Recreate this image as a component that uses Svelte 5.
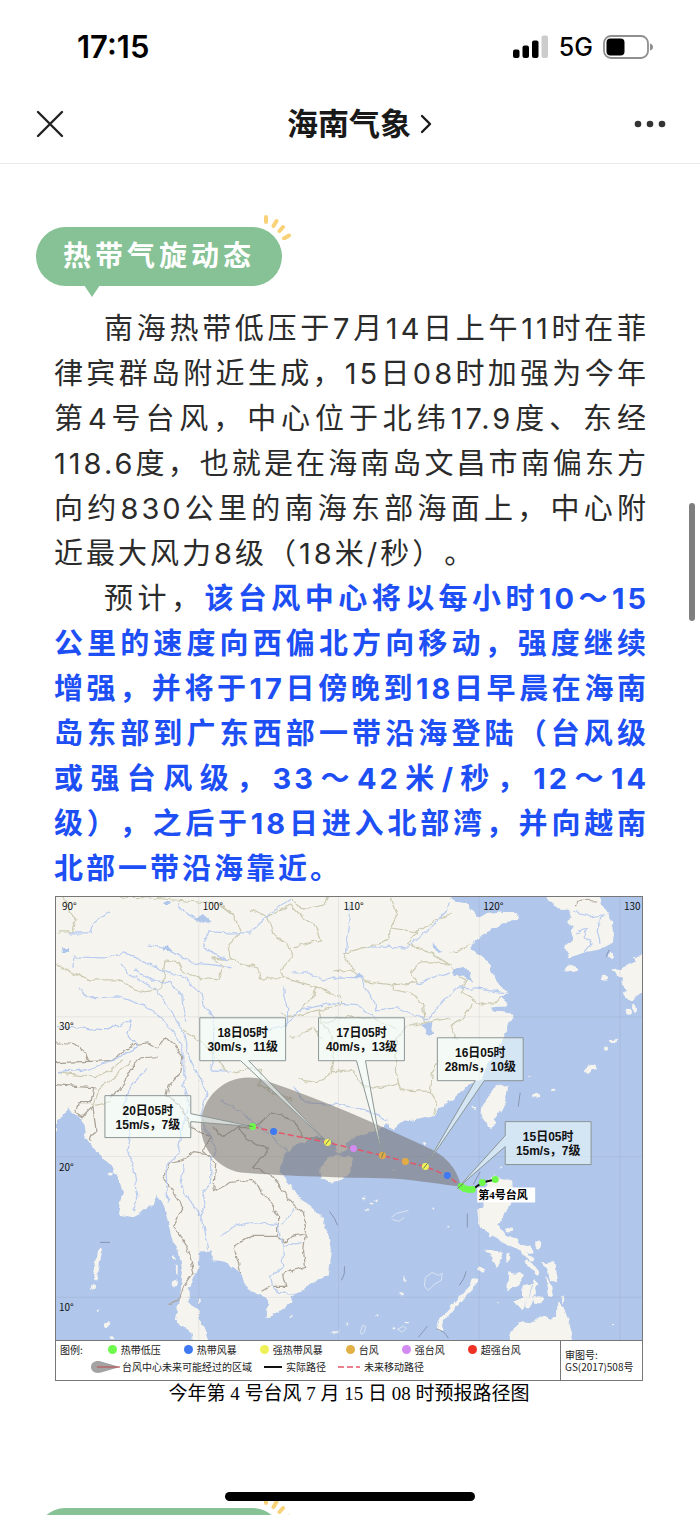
<script lang="ts">
  interface Callout {
    date:  string;
    wind:  string;
    x:     number;
    y:     number;
    shape: string;
  }

  const sea = '#b0c6ea';

  const coasts = [
    // mainland
    '55,890 448,890 448,897 457,903 467,904 470,908 475,914 480,917 487,913 497,912 503,913 518,913 515,921 505,922 500,925 492,929 482,935 475,940 471,949 477,953 483,957 490,965 493,978 500,987 507,990 507,995 500,997 507,1002 505,1007 497,1007 490,1008 495,1011 513,1014 513,1018 507,1022 508,1030 503,1033 503,1038 497,1050 490,1063 480,1080 473,1083 460,1093 450,1101 440,1108 433,1117 417,1120 400,1123 392,1130 385,1124 390,1119 383,1128 370,1133 357,1138 345,1143 347,1150 337,1155 335,1145 330,1140 317,1137 300,1143 287,1152 280,1163 279,1173 290,1185 298,1198 312,1208 322,1218 328,1237 331,1253 328,1277 313,1283 300,1293 290,1297 292,1303 280,1312 270,1317 266,1319 267,1307 266,1298 257,1295 250,1292 243,1283 240,1273 230,1267 223,1263 212,1262 212,1251 199,1252 198,1267 193,1280 188,1290 188,1302 197,1312 202,1327 209,1345 193,1345 190,1330 178,1325 174,1320 177,1307 180,1290 182,1273 178,1253 172,1243 168,1227 165,1213 160,1202 156,1197 152,1205 138,1215 132,1218 118,1215 122,1193 118,1180 112,1167 103,1160 93,1150 85,1138 82,1127 78,1123 63,1128 50,1132 50,890',
    // Taiwan, Hainan
    '502,1084 508,1087 505,1103 500,1113 495,1120 492,1130 487,1125 481,1117 482,1107 490,1095 495,1087',
    '330,1157 338,1156 352,1157 353,1162 348,1175 333,1183 322,1179 320,1168 325,1161',
    // Korea, Kyushu
    '547,890 548,901 557,908 568,910 572,917 567,920 573,927 570,933 573,940 565,948 567,953 568,958 577,955 587,952 597,950 607,947 612,942 613,930 610,917 603,907 598,890',
    '646,955 633,956 635,962 630,965 620,968 612,970 617,975 623,978 622,985 627,990 622,995 632,1002 637,997 646,990',
    // Luzon
    '487,1180 493,1177 500,1179 512,1182 513,1190 512,1203 505,1212 502,1220 497,1225 503,1233 507,1238 517,1240 522,1245 530,1247 533,1253 525,1253 510,1246 503,1243 493,1237 488,1238 488,1233 482,1230 478,1220 477,1210 483,1208 485,1190',
    // Visayas
    '484,1250 500,1252 502,1260 497,1268 492,1258',
    '508,1273 525,1276 517,1287 507,1292',
    '540,1263 555,1262 558,1283 550,1281 547,1270',
    '545,1278 552,1287 554,1298 548,1297',
    '521,1287 532,1285 528,1300 522,1312 514,1303 522,1298',
    // Mindanao
    '557,1302 563,1307 568,1320 572,1333 570,1345 507,1345 513,1328 522,1322 533,1323 540,1317 550,1320 557,1313',
  ];

  const islands = [
    [572, 969, 6, 3], [611, 955, 2, 4], [604, 978, 4, 2], [628, 1012, 3, 2], [634, 1009, 2, 4],
    [613, 1041, 4, 2], [606, 1049, 2, 2], [592, 1068, 5, 3], [588, 1071, 2, 3], [529, 1077, 2, 1],
    [534, 1097, 3, 1], [538, 1096, 2, 2], [554, 1091, 2, 1], [474, 1108, 2, 1], [501, 1168, 1, 1],
    [538, 1245, 3, 4], [538, 1300, 6, 4], [508, 1231, 4, 2], [481, 1271, 4, 2], [508, 1258, 2, 3],
    [92, 1288, 2, 3], [97, 1310, 1, 1], [106, 1325, 3, 3], [111, 1339, 2, 2], [176, 1270, 1, 5],
    [174, 1284, 2, 4], [173, 1258, 1, 3], [186, 1316, 4, 7], [199, 1302, 1, 3], [110, 1174, 3, 2],
    [363, 1199, 2, 1], [372, 1204, 2, 1], [366, 1211, 3, 1], [376, 1201, 1, 1], [433, 1209, 1, 1],
    [448, 1227, 1, 1], [404, 1280, 1, 3], [401, 1295, 3, 1], [407, 1323, 3, 1], [334, 1333, 3, 1],
    [347, 1325, 1, 2], [376, 1317, 1, 1], [291, 1317, 1, 1], [612, 1326, 1, 1], [393, 1330, 2, 1],
    [423, 1145, 1, 2], [393, 1169, 1, 1], [563, 1300, 1, 4], [498, 1304, 1, 1], [440, 1330, 2, 2],
  ];

  const ridges = [
    '475,1280 470,1289 462,1297 450,1311 441,1322 438,1330',
    '536,1282 532,1295 527,1307',
    '526,1262 531,1266 537,1274',
    '100,1250 97,1262 96,1270 94,1278',
    '520,1249 527,1256 532,1260',
  ];

  const reefs = [
    'M425 1278l7-5 6 3 4-2-1 7-7 4-6 6-4-4z',
    'M391 1218l5-4 8-2 4-1M392 1220l6 2 6-4',
    'M360 1333l2-7 3 1-1 6-3 2z',
    'M397 1330l6-3 3 2-4 4z',
    'M333 1335l6-4',
  ];

  const provinces = [
    '63,897 70,913 75,920 72,932 57,932',
    '117,897 150,898 197,902 217,903 233,915 240,932 227,945 230,960 212,958 223,967 217,980 200,978 183,973 177,962 165,960 163,980 157,990 143,992 130,988 117,980 90,980 70,973 56,965',
    '230,960 247,965 257,968 260,978 283,978 280,970 292,957 288,945 273,935 267,917 250,910',
    '267,917 290,905 300,915 313,923 320,940 293,947',
    '327,897 323,905 302,910 290,897',
    '283,978 300,983 317,987 340,998 340,1005 318,1010 293,1017 280,1013',
    '317,987 310,1000 300,1010',
    '333,972 350,970 365,982 393,985 417,983 410,973 420,962 432,962 450,965',
    '353,970 343,953 367,947 388,940 390,928 417,932 407,945 430,953 450,965',
    '390,928 397,915 390,898',
    '417,932 433,922 450,913',
    '393,985 393,990 410,993 423,1003 425,1023 450,1018',
    '425,1023 405,1027 396,1040 395,1072 400,1090 430,1092 437,1103 433,1115',
    '430,1092 432,1073 437,1062',
    '298,1080 317,1083 333,1072 350,1070 362,1085 383,1088 397,1083',
    '318,1010 322,1023 330,1037 333,1063 330,1075',
    '288,1038 300,1036 313,1028 322,1040',
    '322,1023 350,1016 380,1022 396,1030',
    '450,953 462,950 470,945',
    '450,968 460,977 467,980 460,993 483,1005 493,1005 500,997',
    '473,1003 463,1017 450,1027 457,1040',
    '183,1030 193,1037 207,1047 227,1073',
    '232,1073 250,1068 262,1070 258,1085 275,1095 292,1100',
    '123,1060 105,1072 95,1078 57,1073',
    '130,1062 116,1075 97,1090 92,1105 110,1102',
  ];

  const borders = [
    '55,1043 73,1045 83,1052 88,1062',
    '55,1063 110,1061 133,1045 147,1043 157,1048 165,1038 173,1045 182,1057 180,1073 167,1087 165,1097 178,1103 190,1127 200,1133 210,1137 203,1152 215,1163 213,1192 230,1183 250,1180 267,1197 277,1217 277,1237 250,1237 233,1247 240,1273',
    '55,1085 77,1087 93,1088 90,1103 77,1103 75,1112 82,1117 92,1107 95,1130 90,1141',
    '157,1057 140,1058 130,1070 123,1083 110,1100',
    '207,1155 193,1153 183,1160 170,1163 162,1178 172,1192 182,1208 173,1227 187,1247 193,1273 183,1287 178,1300 168,1305',
    '210,1127 223,1137 237,1127 250,1130 273,1113 293,1120 303,1137 325,1140',
    '237,1127 247,1140 268,1150 253,1167 270,1175 287,1198 302,1213 305,1230 303,1253 305,1267 282,1275 285,1287 270,1287 262,1292',
    '277,1237 285,1243 292,1237 303,1235',
    '574,906 580,900 597,901',
  ];

  const rivers = [
    '68,933 90,933 93,923 107,912',
    '72,968 73,957 103,958 123,952 160,970 183,978 200,993 203,1007 213,1017 213,1060 210,1070 230,1072',
    '78,988 87,998 117,997 143,1005 160,1018 177,1037 183,1057 183,1087 188,1103 180,1135 177,1155 165,1167 167,1203',
    '120,965 130,975 153,988 167,1007 183,1033 188,1057 207,1093 200,1117 215,1150 210,1157 210,1183 202,1192 205,1207 200,1217 207,1250',
    '133,970 150,980 170,983 182,997 185,1023',
    '147,945 167,949 190,963 213,965 230,968',
    '177,903 183,912 195,918',
    '250,933 230,933 208,932 202,943 210,953 227,960',
    '147,1067 130,1087 122,1107 130,1135 127,1150 133,1170 137,1197 132,1212',
    '183,1163 180,1187 200,1217',
    '220,1237 233,1227 250,1223 277,1225 282,1243 283,1267 270,1277 272,1287 277,1293 293,1295',
    '283,1247 302,1242',
    '281,1225 287,1218 294,1208',
    '220,1100 240,1112 262,1130 280,1145 288,1152',
    '250,1035 283,1027 300,1010 333,1003 358,1005 377,1020',
    '292,973 308,973 323,980 333,977 360,978 370,997 377,1010 397,1008 427,1020 443,1000 460,987 483,990 507,993',
    '350,903 347,933 345,952',
    '367,947 407,948 437,922 450,903',
    '250,932 263,920 270,913 290,900',
    '282,985 287,1007 287,1027',
    '293,1087 303,1103 340,1105 363,1110 387,1120',
    '416,984 428,980 450,973',
    '585,952 592,943 584,936 588,928 577,933',
    '574,912 590,917 603,915 597,930 600,943',
  ];

  const dashes = [
    'M329 1212q6 7 8 14', 'M344 1267q1 8-3 14', 'M427 1327l-9 11', 'M480 1172l-7 13',
    'M467 1214v14', 'M466 1272q-2 8-7 14', 'M520 1093l-2 14', 'M99 1243h10', 'M609 950l-3 7', 'M436 1330q8 1 12 9',
  ];

  const gridX = [198, 338, 479, 620];
  const gridY = [1017, 1157, 1298];

  const degrees = [
    { text: '90°',  x: 61,  y: 910 },
    { text: '100°', x: 202, y: 910 },
    { text: '110°', x: 343, y: 910 },
    { text: '120°', x: 483, y: 910 },
    { text: '130',  x: 624, y: 910 },
    { text: '30°',  x: 58,  y: 1030 },
    { text: '20°',  x: 58,  y: 1171 },
    { text: '10°',  x: 58,  y: 1312 },
  ];

  const callouts: Callout[] = [
    { date: '20日05时', wind: '15m/s，7级',  x: 147, y: 1096, shape: 'M104 1096h86v18l62 13-62-5v16h-86z' },
    { date: '18日05时', wind: '30m/s，11级', x: 242, y: 1018, shape: 'M199 1018h86v43h-37l79 82-87-82h-41z' },
    { date: '17日05时', wind: '40m/s，13级', x: 361, y: 1018, shape: 'M318 1018h86v43h-39l17 95-26-95h-38z' },
    { date: '16日05时', wind: '28m/s，10级', x: 480, y: 1038, shape: 'M437 1038h86v43h-39l-59 86 50-86h-38z' },
    { date: '15日05时', wind: '15m/s，7级',  x: 548, y: 1122, shape: 'M505 1122h86v43h-86v-18l-46 40 46-51z' },
  ];

  const forecast = [
    { x: 252, y: 1127, color: '#6dfa4b' },
    { x: 273, y: 1132, color: '#3f79f2' },
    { x: 327, y: 1143, color: '#eff158' },
    { x: 353, y: 1149, color: '#d28bf0' },
    { x: 382, y: 1156, color: '#e2ab45' },
    { x: 405, y: 1162, color: '#e2ab45' },
    { x: 425, y: 1167, color: '#eff158' },
    { x: 447, y: 1176, color: '#3f79f2' },
  ];

  const observed = [[461, 1187], [464, 1189], [468, 1190], [472, 1190], [482, 1183], [495, 1180]];

  const levels = [
    { name: '热带低压',   color: '#6dfa4b' },
    { name: '热带风暴',   color: '#3f79f2' },
    { name: '强热带风暴', color: '#eff158' },
    { name: '台风',       color: '#e2b045' },
    { name: '强台风',     color: '#d28bf0' },
    { name: '超强台风',   color: '#ee3123' },
  ];
</script>

{#snippet rays()}
  <svg class="rays" viewBox="0 0 30 26" aria-hidden="true">
    <path d="M4 3v5M14.500 7l-3 5M21 13l-3.500 4M27 21.500l-5 3" />
  </svg>
{/snippet}

<div class="screen" lang="zh-CN">
  <div class="status">
    <time class="clock">17:15</time>
    <div class="signals">
      <svg class="bars" viewBox="0 0 36 24" aria-label="信号">
        <rect x="0" y="14.500" width="6.500" height="8.500" rx="2" />
        <rect x="9.500" y="10.500" width="6.500" height="12.500" rx="2" />
        <rect x="19" y="5.500" width="6.500" height="17.500" rx="2" />
        <rect x="28.500" y="0.500" width="6.500" height="22.500" rx="2" fill="#ccc" />
      </svg>
      <span class="network">5G</span>
      <svg class="battery" viewBox="0 0 50 24" aria-label="电量">
        <rect x="1" y="1" width="44" height="22" rx="7" fill="none" stroke="#8f8f8f" stroke-width="1.800" />
        <rect x="3.500" y="3.500" width="18" height="17" rx="4" />
        <path d="M47 8.500q3 1 3 3.500t-3 3.500z" fill="#8f8f8f" />
      </svg>
    </div>
  </div>

  <header class="nav">
    <button class="nav-btn" aria-label="关闭">
      <svg width="28" height="28" viewBox="0 0 28 28"><path d="M2 2l24 24M26 2L2 26" /></svg>
    </button>
    <a class="account" href="#account">
      <span>海南气象</span>
      <svg width="12" height="20" viewBox="0 0 12 20"><path d="M2 2l8 8-8 8" /></svg>
    </a>
    <button class="nav-btn" aria-label="更多">
      <svg width="34" height="8" viewBox="0 0 34 8">
        <circle cx="5" cy="4" r="3.300" /><circle cx="17" cy="4" r="3.300" /><circle cx="29" cy="4" r="3.300" />
      </svg>
    </button>
  </header>

  <main class="article">
    <h2 class="badge">热带气旋动态{@render rays()}</h2>

    <div class="copy">
      <p>南海热带低压于7月14日上午11时在菲律宾群岛附近生成，15日08时加强为今年第4号台风，中心位于北纬17.9度、东经118.6度，也就是在海南岛文昌市南偏东方向约830公里的南海东部海面上，中心附近最大风力8级（18米/秒）。</p>
      <p>预计，<strong>该台风中心将以每小时10～15公里的速度向西偏北方向移动，强度继续增强，并将于17日傍晚到18日早晨在海南岛东部到广东西部一带沿海登陆（台风级或强台风级，33～42米/秒，12～14级），之后于18日进入北部湾，并向越南北部一带沿海靠近。</strong></p>
    </div>

    <figure>
      <div class="chart">
        <svg class="map" viewBox="55 897 587 444" role="img" aria-label="今年第4号台风预报路径图">
          <defs>
            <filter id="rough" x="0" y="0" width="100%" height="100%">
              <feTurbulence type="fractalNoise" baseFrequency="0.12" numOctaves="2" seed="4" />
              <feDisplacementMap in="SourceGraphic" scale="6" xChannelSelector="R" yChannelSelector="G" />
            </filter>
          </defs>
          <g filter="url(#rough)">
            <rect x="40" y="880" width="620" height="480" fill={sea} />
            <g class="land">
              {#each coasts as points}<polygon {points} />{/each}
              {#each islands as [x, y, rx, ry]}<ellipse cx={x} cy={y} {rx} {ry} />{/each}
            </g>
            {#each ridges as points}<polyline class="ridge" {points} />{/each}
            {#each provinces as points}<polyline class="province" {points} />{/each}
            {#each borders as points}<polyline class="border" {points} />{/each}
            {#each rivers as points}<polyline class="river" {points} />{/each}
            <polyline class="river wide" points="57,1073 87,1070 117,1058 137,1047 127,1033 130,1020 107,1030 57,1027" />
            <g fill={sea}>
              <path d="M193 918l9-3 9 8-9 1zM162 950l6-4 4 4zM60 949h8v3h-7zM420 1025l12-3-1 7 3 5-6 2zM353 977l6-4 5 6zM431 942l11 10-5 1zM452 971l8-4 10 6 2 8-8-5-10-1zM162 901h7v2h-6zM55 1122l6-5 6-9 4 7 8 1 4 8 2 10-30 6z" />
            </g>
          </g>
          {#each reefs as d}<path class="reef" {d} />{/each}
          {#each gridX as x}<path class="grid" d="M{x} 897v444" />{/each}
          {#each gridY as y}<path class="grid" d="M55 {y}h587" />{/each}
          {#each dashes as d}<path class="dash" {d} />{/each}

          <path
            class="cone"
            d="M461 1187C456 1168 446 1156 423 1146C375 1124 325 1101 268 1082A48 48 0 1 0 240 1173C275 1176 330 1178 392 1179C420 1181 440 1185 461 1187Z"
          />

          {#each callouts as c}
            <path class="callout" d={c.shape} />
            <text class="callout-text" x={c.x} y={c.y + 19}>{c.date}</text>
            <text class="callout-text" x={c.x} y={c.y + 33}>{c.wind}</text>
          {/each}

          <polyline class="track" points={forecast.map((p) => `${p.x},${p.y}`).join(' ') + ' 461,1187'} />
          {#each forecast as p}<circle cx={p.x} cy={p.y} r="3.500" fill={p.color} />{/each}
          <polyline class="past" points={observed.map((p) => p.join(',')).join(' ')} />
          {#each observed as [x, y]}<circle cx={x} cy={y} r="3.500" fill="#6dfa4b" />{/each}
          <path d="M457 1189l6-5M252 1127l-5-1M325 1145l4-5M381 1158l2-5M423 1169l4-5" stroke="#6d8058" />

          <rect x="477" y="1188" width="58" height="15" fill="#fff" />
          <text class="storm-name" x="478" y="1200">第4号台风</text>

          {#each degrees as d}<text class="degree" x={d.x} y={d.y}>{d.text}</text>{/each}
        </svg>

        <div class="legend">
          <div class="legend-main">
            <div class="legend-row">
              <span class="legend-title">图例:</span>
              {#each levels as level}
                <span class="key"><i class="dot" style="background:{level.color}"></i>{level.name}</span>
              {/each}
            </div>
            <div class="legend-row lines">
              <span class="key area">
                <svg width="30" height="14" viewBox="0 0 30 14">
                  <path d="M29 7L10 1.500C4 0 0 3 0 7s4 7 10 5.500z" fill="#a3a3a3" />
                  <path d="M6 7h23" stroke="#c0484c" />
                </svg>台风中心未来可能经过的区域
              </span>
              <span class="key"><i class="solid"></i>实际路径</span>
              <span class="key">
                <svg width="22" height="4" viewBox="0 0 22 4"><path class="track" d="M0 2h22" /></svg>未来移动路径
              </span>
            </div>
          </div>
          <div class="legend-code">
            <span>审图号:</span>
            <span>GS(2017)508号</span>
          </div>
        </div>
      </div>
      <figcaption>今年第 4 号台风 7 月 15 日 08 时预报路径图</figcaption>
    </figure>

    <div class="badge next">{@render rays()}</div>
  </main>

  <div class="scroll-thumb"></div>
  <div class="home-bar"></div>
</div>

<style>
  :global(body) { background:#fff; }

  .screen { position:relative; height:100vh; overflow:hidden; display:flex; flex-direction:column; background:#fff; color:#2b2b2b; font-family:Inter,"Noto Sans CJK SC",sans-serif; text-spacing-trim:space-all; }

  /* status bar */
  .status  { display:flex; flex:none; align-items:center; justify-content:space-between; height:84px; padding:10px 47px 0 77px; box-sizing:border-box; color:#000; }
  .clock   { font-size:31px; font-weight:600; line-height:36px; }
  .signals { display:flex; align-items:center; gap:10px; }
  .bars    { width:36px; height:24px; }
  .battery { width:50px; height:24px; }
  .network { font-size:25px; font-weight:500; line-height:32px; }

  /* title bar */
  .nav      { display:flex; flex:none; align-items:center; justify-content:space-between; height:80px; padding:0 33px 0 36px; box-sizing:border-box; border-bottom:1px solid #ebebeb; }
  .nav-btn  { display:flex; align-items:center; min-width:34px; height:44px; padding:0; border:0; background:none; }
  .nav-btn path   { fill:none; stroke:#222; stroke-width:2.4; stroke-linecap:round; }
  .nav-btn circle { fill:#333; }
  .account  { display:flex; align-items:center; gap:9px; margin-left:16px; color:#191919; font-size:31px; font-weight:600; line-height:44px; text-decoration:none; }
  .account path { fill:none; stroke:#191919; stroke-width:2.4; stroke-linecap:round; stroke-linejoin:round; }

  /* article */
  .article { flex:1; min-height:0; overflow:hidden; padding:63px 0 0; }

  .badge         { position:relative; width:fit-content; height:59px; margin:0 0 0 36px; padding:0 27px; box-sizing:border-box; border-radius:30px; background:#86c295; color:#fff; font-size:28px; font-weight:700; line-height:59px; letter-spacing:4px; }
  .badge::after  { content:''; position:absolute; left:48px; top:58px; border:8px solid transparent; border-top:12px solid #86c295; border-bottom:0; }
  .badge.next    { width:246px; margin-top:101px; }
  .rays          { position:absolute; right:-10px; top:-13px; width:30px; height:26px; }
  .rays path     { fill:none; stroke:#f9d277; stroke-width:4; stroke-linecap:round; }

  .copy   { padding:20px 51px 0 54px; font-size:29px; line-height:45px; letter-spacing:3px; text-align:justify; }
  .copy p { margin:0; text-indent:50px; }
  strong  { color:#1d4ff5; font-weight:700; }

  figure     { margin:5px 57px 0 55px; }
  .chart     { border:1px solid #777; }
  .map       { display:block; width:100%; }
  figcaption { color:#000; font-family:"Liberation Serif","Noto Sans CJK SC",serif; font-size:19px; line-height:26px; text-align:center; }

  .land     { fill:#f5f4ef; }
  .ridge    { fill:none; stroke:#f5f4ef; stroke-width:4; stroke-linecap:round; }
  .province { fill:none; stroke:#cbcbb2; stroke-width:1.2; }
  .border   { fill:none; stroke:#aaa296; stroke-width:1.2; }
  .river    { fill:none; stroke:#b9ccf0; stroke-width:1.2; }
  .river.wide { stroke:#b2c7ef; }
  .reef     { fill:none; stroke:#dbe4f2; }
  .grid     { stroke:#7c8295; stroke-opacity:.13; }
  .dash     { fill:none; stroke:#8796b2; }
  .cone     { fill:#746f6b; fill-opacity:.55; }
  .track    { fill:none; stroke:#e4566a; stroke-width:1.5; stroke-dasharray:6 3; }
  .past     { fill:none; stroke:#111; stroke-width:2; }
  .callout  { fill:#f2fffc; fill-opacity:.55; stroke:#8c9696; }
  .callout-text { fill:#111; font:bold 12px "Liberation Sans","Noto Sans CJK SC",sans-serif; text-anchor:middle; }
  .storm-name   { fill:#000; font:bold 11px "Liberation Serif","Noto Sans CJK SC",serif; }
  .degree       { fill:#111; font:10px "Noto Sans CJK SC",sans-serif; }

  .legend       { display:flex; border-top:1px solid #777; color:#222; font-family:"Noto Sans CJK SC",sans-serif; font-size:10px; line-height:12px; white-space:nowrap; }
  .legend-main  { flex:1; padding:0 0 5px 4px; }
  .legend-row   { display:flex; align-items:center; gap:23px; height:17px; }
  .legend-row.lines { gap:12px; padding-left:31px; }
  .legend-title { margin-right:2px; }
  .legend-code  { display:flex; flex-direction:column; justify-content:center; width:77px; padding-left:4px; border-left:1px solid #777; }
  .key      { display:flex; align-items:center; gap:4px; }
  .key.area { gap:1px; }
  .dot      { width:9px; height:9px; border-radius:50%; }
  .solid    { width:18px; border-top:2px solid #111; }

  .scroll-thumb { position:absolute; right:5px; top:503px; width:6px; height:118px; border-radius:3px; background:#7f7f7f; }
  .home-bar     { position:absolute; left:50%; bottom:14px; width:250px; height:9px; margin-left:-125px; border-radius:5px; background:#000; }
</style>
